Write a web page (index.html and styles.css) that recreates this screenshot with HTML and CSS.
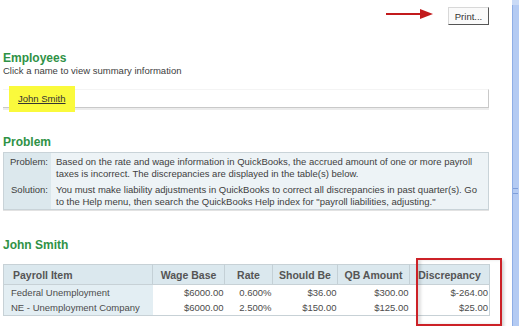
FILE: index.html
```html
<!DOCTYPE html>
<html lang="en">
<head>
  <meta charset="UTF-8">
  <title>Payroll Summary</title>
  <link rel="stylesheet" href="styles.css">
</head>
<body>
  <div class="window">
    <div class="page">
      <div class="content">
        <div class="toolbar">
          <svg class="arrow" width="48" height="12" viewBox="0 0 48 12">
            <line x1="0" y1="6" x2="36" y2="6" stroke="#c21a1c" stroke-width="2"/>
            <polygon points="34,1 47,6 34,11" fill="#c21a1c"/>
          </svg>
          <button class="print-btn" type="button">Print...</button>
        </div>

        <section class="employees">
          <h2>Employees</h2>
          <p class="hint">Click a name to view summary information</p>
          <div class="emp-list">
            <a class="emp-link" href="#">John Smith</a>
          </div>
        </section>

        <section class="problem">
          <h2>Problem</h2>
          <table class="info">
            <tr>
              <th>Problem:</th>
              <td>Based on the rate and wage information in QuickBooks, the accrued amount of one or more payroll taxes is incorrect. The discrepancies are displayed in the table(s) below.</td>
            </tr>
            <tr>
              <th>Solution:</th>
              <td>You must make liability adjustments in QuickBooks to correct all discrepancies in past quarter(s). Go to the Help menu, then search the QuickBooks Help index for "payroll liabilities, adjusting."</td>
            </tr>
          </table>
        </section>

        <section class="detail">
          <h2>John Smith</h2>
          <div class="table-wrap">
            <table class="payroll">
              <colgroup>
                <col style="width:149px">
                <col style="width:72px">
                <col style="width:48px">
                <col style="width:65px">
                <col style="width:72px">
                <col style="width:80px">
              </colgroup>
              <thead>
                <tr>
                  <th class="item">Payroll Item</th>
                  <th>Wage Base</th>
                  <th>Rate</th>
                  <th>Should Be</th>
                  <th>QB Amount</th>
                  <th>Discrepancy</th>
                </tr>
              </thead>
              <tbody>
                <tr>
                  <td class="item">Federal Unemployment</td>
                  <td>$6000.00</td>
                  <td>0.600%</td>
                  <td>$36.00</td>
                  <td>$300.00</td>
                  <td>$-264.00</td>
                </tr>
                <tr>
                  <td class="item">NE - Unemployment Company</td>
                  <td>$6000.00</td>
                  <td>2.500%</td>
                  <td>$150.00</td>
                  <td>$125.00</td>
                  <td>$25.00</td>
                </tr>
              </tbody>
            </table>
            <div class="callout"></div>
          </div>
        </section>
      </div>
    </div>

    <div class="scrollbar">
      <div class="scroll-up"></div>
      <div class="scroll-thumb"><span class="grip"></span></div>
    </div>
  </div>
</body>
</html>
```

FILE: styles.css
```css
body {
  margin: 0;
  background: #fff;
  font-family: "Liberation Sans", Arial, sans-serif;
  font-size: 9.5px;
  color: #404040;
}
.window {
  display: flex;
  width: 520px;
  height: 326px;
  overflow: hidden;
}
.page {
  width: 511px;
  flex-shrink: 0;
  padding-left: 3px;
  box-sizing: border-box;
}
.content {
  width: 486px;
}

/* top bar */
.toolbar {
  display: flex;
  justify-content: flex-end;
  align-items: flex-start;
  gap: 14px;
  padding-top: 7px;
  height: 25px;
}
.arrow {
  margin-top: 1px;
}
.print-btn {
  width: 41px;
  height: 18px;
  padding: 0;
  background: #fafafa;
  border: 1px solid #d8d8d8;
  border-right-color: #555;
  border-bottom-color: #555;
  font-family: inherit;
  font-size: 9.5px;
  color: #333;
}

h2 {
  margin: 0;
  font-size: 12px;
  line-height: 14px;
  font-weight: bold;
  color: #2f9246;
}

/* employees */
.employees h2 {
  margin-top: 19px;
}
.hint {
  margin: 0;
  line-height: 12px;
}
.emp-list {
  margin-top: 12px;
  height: 17px;
  display: flex;
  align-items: center;
  border-top: 1px solid #f4f4f4;
  border-right: 1px solid #c9c9c9;
  border-bottom: 1px solid #c9c9c9;
  box-shadow: 0 2px 0 #ececec;
}
.emp-link {
  height: 26px;
  margin-left: 6px;
  padding: 0 9px;
  display: flex;
  align-items: center;
  background: #fafa3c;
  color: #333;
  text-decoration: underline;
}

/* problem */
.problem h2 {
  margin-top: 27px;
}
.info {
  margin-top: 3px;
  width: 100%;
  border-collapse: collapse;
  border: 1px solid #c9d3d8;
  box-shadow: 0 1px 0 #e2e2e2;
}
.info th,
.info td {
  vertical-align: top;
  line-height: 12px;
  padding: 3px 0 1px;
}
.info th {
  width: 44px;
  padding-right: 3px;
  text-align: right;
  font-weight: normal;
  background: #dce8ed;
}
.info td {
  padding-left: 5px;
  padding-right: 4px;
  background: #edf3f6;
}

/* payroll table */
.detail h2 {
  margin-top: 28px;
}
.table-wrap {
  position: relative;
  margin-top: 12px;
}
.payroll {
  width: 486px;
  table-layout: fixed;
  border-collapse: collapse;
  border: 1px solid #c7d1d6;
}
.payroll th {
  height: 19px;
  padding: 0;
  background: #dbe8ee;
  border-right: 1px solid #c4d0d6;
  border-bottom: 1px solid #c7d1d6;
  font-size: 10.5px;
  font-weight: bold;
  color: #555;
  text-align: center;
}
.payroll th.item {
  text-align: left;
  padding-left: 9px;
}
.payroll td {
  height: 15px;
  padding: 0 1px 0 0;
  text-align: right;
  color: #4c4c4c;
  background: #fff;
}
.payroll td.item {
  padding-left: 7px;
  text-align: left;
  background: #e3eef3;
}

/* annotation box round the discrepancy column */
.callout {
  position: absolute;
  left: 413px;
  top: -6px;
  width: 82px;
  height: 64px;
  border: 2px solid #cc2127;
  box-shadow: inset 3px 0 3px rgba(0,0,0,0.12), 2px 2px 3px rgba(0,0,0,0.18);
}

/* scrollbar */
.scrollbar {
  width: 9px;
  flex-shrink: 0;
  display: flex;
  flex-direction: column;
  padding-left: 1px;
  padding-right: 1px;
  box-sizing: border-box;
}
.scroll-up {
  height: 5px;
  background: #c9daf6;
}
.scroll-thumb {
  flex: 1;
  display: flex;
  align-items: center;
  justify-content: center;
  background: #b4cbf3;
  box-shadow: inset 1px 0 0 #8eaee6;
}
.grip {
  width: 5px;
  height: 4px;
  margin-top: 50px;
  border-top: 1px solid #7f9fdb;
  border-bottom: 1px solid #7f9fdb;
}
```
